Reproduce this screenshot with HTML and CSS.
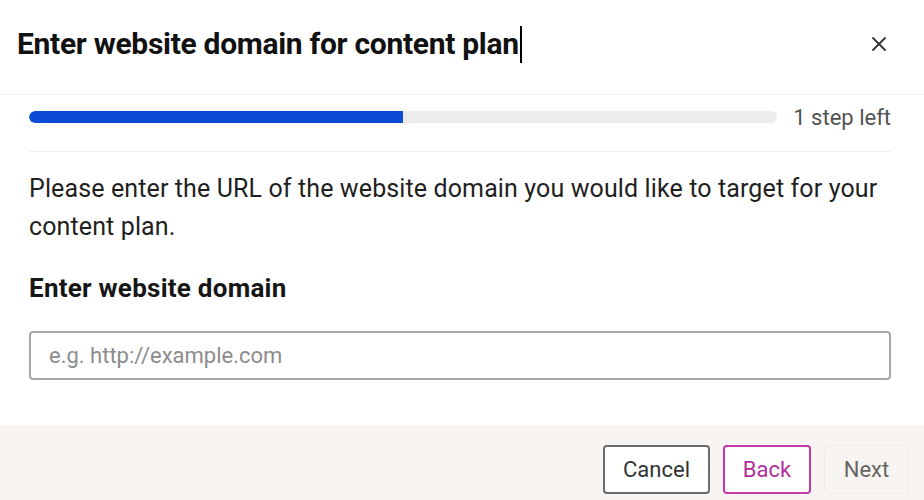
FILE: index.html
```html
<!DOCTYPE html>
<html lang="en">
<head>
<meta charset="utf-8">
<title>Enter website domain</title>
<link rel="stylesheet" href="styles.css">
</head>
<body>
<div class="dialog">
  <header class="header">
    <h1 class="title">Enter website domain for content plan<span class="caret"></span></h1>
    <button class="close" aria-label="Close">
      <svg width="16" height="16" viewBox="0 0 16 16"><path d="M2 2 L14 14 M14 2 L2 14" stroke="#333" stroke-width="1.8" stroke-linecap="round" fill="none"/></svg>
    </button>
  </header>
  <section class="body">
    <div class="progress-row">
      <div class="track"><div class="fill" style="width:50%"></div></div>
      <span class="steps">1 step left</span>
    </div>
    <div class="rule"></div>
    <p class="intro">Please enter the URL of the website domain you would like to target for your content plan.</p>
    <label class="label" for="domain">Enter website domain</label>
    <input id="domain" class="input" type="text" placeholder="e.g. http://example.com">
  </section>
  <footer class="footer">
    <button class="btn btn-cancel">Cancel</button>
    <button class="btn btn-back">Back</button>
    <button class="btn btn-next">Next</button>
  </footer>
</div>
</body>
</html>
```
FILE: styles.css
```css
* { box-sizing: border-box; }
html, body { margin: 0; padding: 0; background: #fff; }
body { font-family: Roboto, "Liberation Sans", sans-serif; color: #161616; }
.dialog { width: 924px; height: 500px; display: flex; flex-direction: column; overflow: hidden; }
.header {
  height: 95px; flex: none; display: flex; align-items: center; justify-content: space-between;
  padding: 0 37px 6px 17px; border-bottom: 1px solid #f3efec;
}
.title { margin: 0; font-size: 30px; font-weight: 700; line-height: 36px; display: flex; align-items: center; letter-spacing: -0.3px; color: #111; }
.caret { display: inline-block; width: 2px; height: 37px; background: #000; margin-left: 1px; }
.close { border: 0; background: none; padding: 0; width: 16px; height: 16px; display: flex; }
.body { flex: 1; padding: 0 33px 0 29px; }
.progress-row { display: flex; align-items: center; gap: 16px; height: 56px; padding-bottom: 12px; }
.track { flex: 1; height: 12px; background: #ececec; border-radius: 6px; overflow: hidden; }
.fill { height: 100%; background: #0b4bd6; border-radius: 6px 0 0 6px; }
.steps { font-size: 22px; color: #525252; white-space: nowrap; }
.rule { height: 1px; background: #f3ede9; }
.intro { margin: 18px 0 0; font-size: 25px; line-height: 38px; color: #1f1f1f; letter-spacing: 0.12px; }
.label { display: block; margin-top: 26px; font-size: 26px; font-weight: 700; line-height: 32px; letter-spacing: 0.25px; }
.input {
  display: block; width: 100%; margin-top: 27px; height: 49px; border: 2px solid #a8a8a8; border-radius: 4px;
  padding: 0 18px; font-family: inherit; font-size: 22px; color: #222; outline: none;
}
.input::placeholder { color: #8c8c8c; }
.footer {
  height: 75px; flex: none; background: #f7f4f1; display: flex; justify-content: flex-end; align-items: flex-start;
  gap: 13px; padding: 20px 15px 0 0;
}
.btn { height: 49px; border-radius: 4px; font-family: inherit; font-size: 22px; background: #fff; padding: 0; }
.btn-cancel { width: 107px; border: 2px solid #6b6b6b; color: #333; }
.btn-back { width: 88px; border: 2px solid #c13aa8; color: #b4309c; }
.btn-next { width: 85px; border: 1px solid #efebe8; background: #f7f4f1; color: #666; }
```
